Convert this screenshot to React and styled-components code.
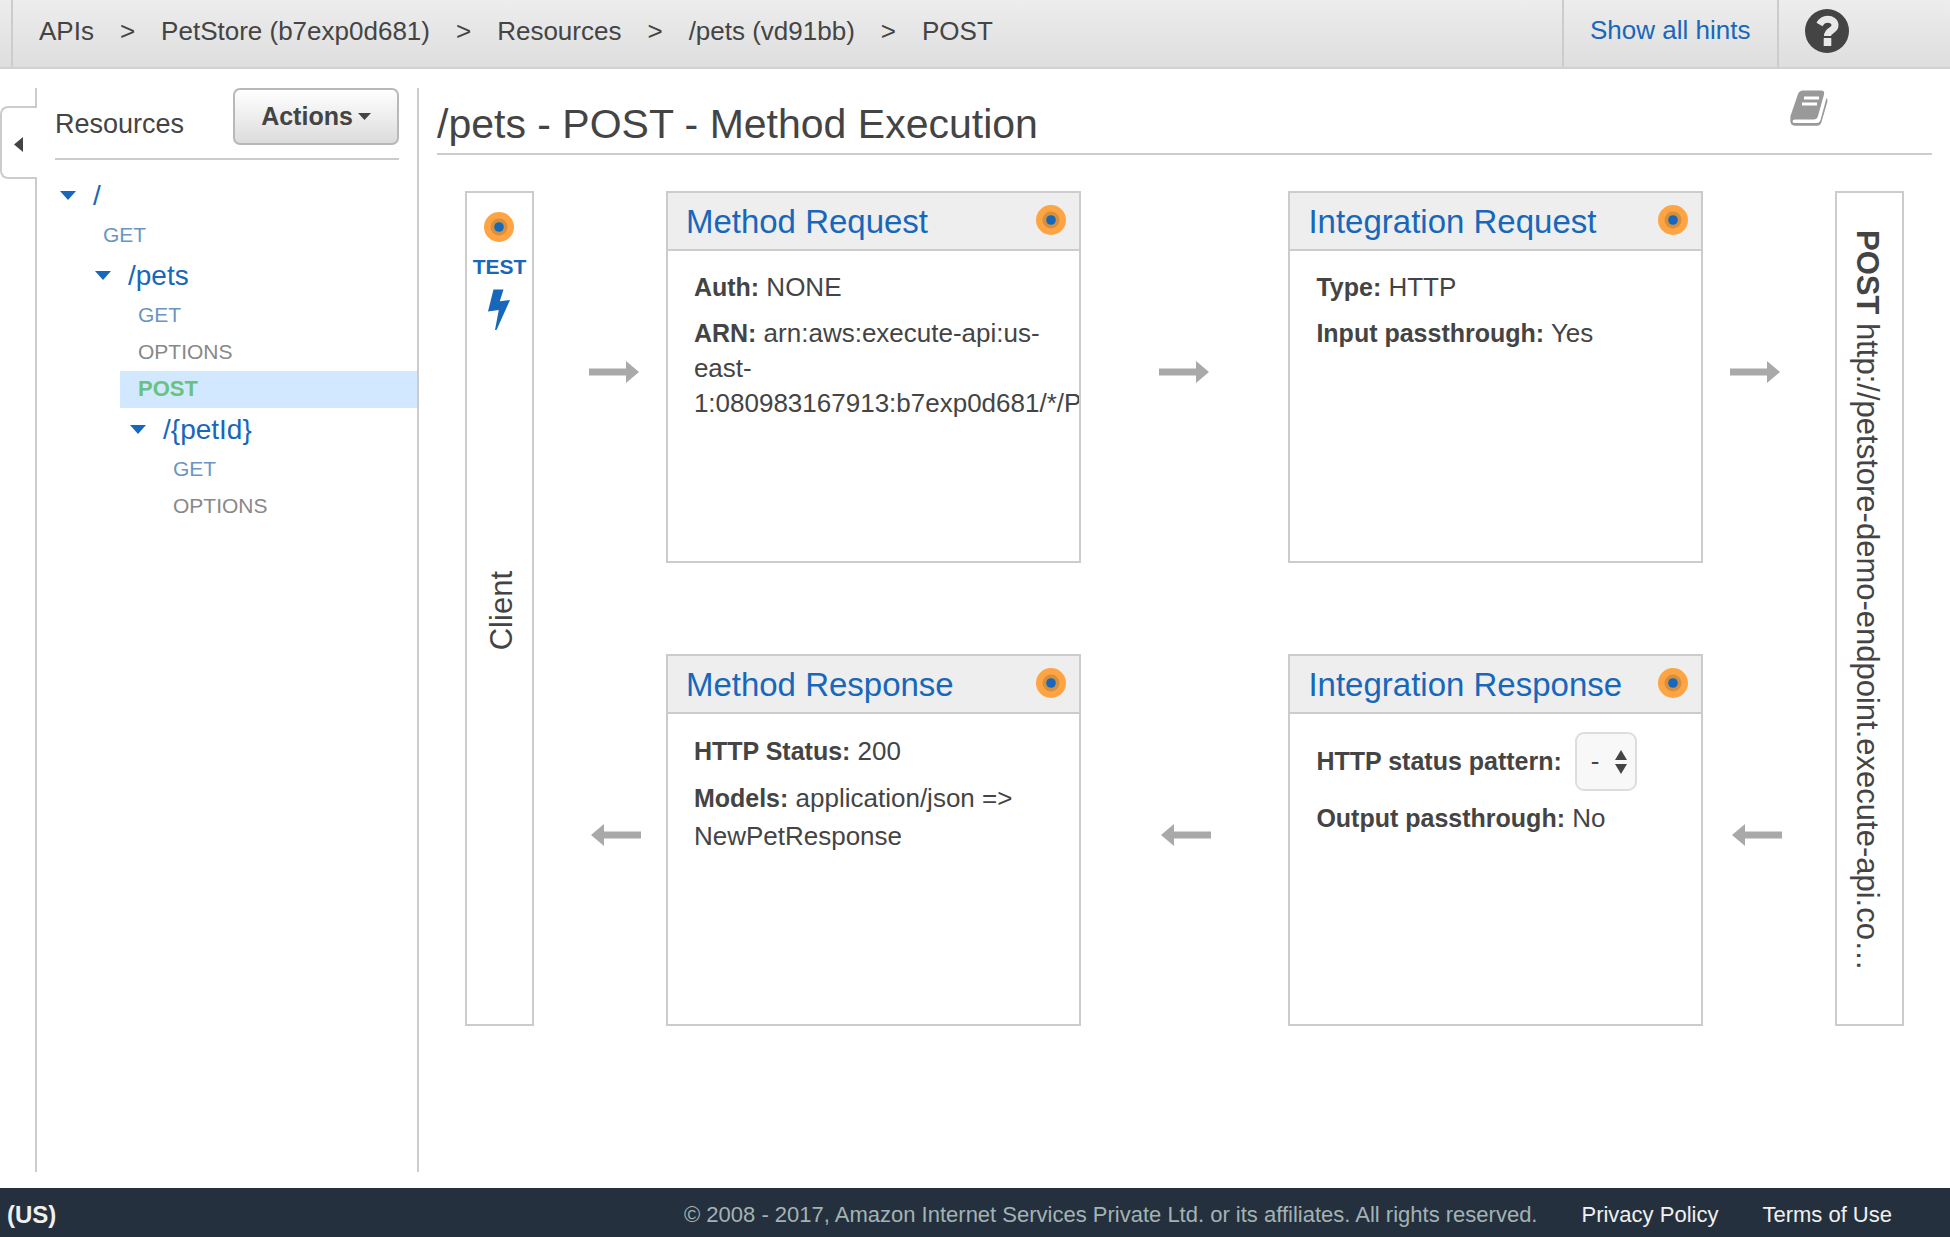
import React from "react";
import styled, { createGlobalStyle } from "styled-components";

const ink = "#444";
const blue = "#1767ba";
const line = "#ccc";

const Global = createGlobalStyle`
  * { box-sizing: border-box; }
  body { margin: 0; background: #fff; color: ${ink}; font-family: "Liberation Sans", Arial, sans-serif; font-size: 26px; }
  a { color: ${blue}; text-decoration: none; }
  button { font: inherit; color: inherit; cursor: pointer; }
  h1, h2, ul, ol, p { margin: 0; padding: 0; font-weight: normal; list-style: none; }
`;

const Page = styled.div`
  min-height: 100vh;
  display: flex;
  flex-direction: column;
`;

const TopBar = styled.header`
  display: flex;
  height: 69px;
  border-bottom: 2px solid #d2d2d2;
  background: linear-gradient(#ededed, #dedede);
  white-space: nowrap;
`;

const Crumbs = styled.ol`
  flex: 1;
  display: flex;
  align-items: center;
  gap: 26px;
  && { margin-left: 11px; padding: 0 0 6px 26px; }
  border-left: 2px solid ${line};
  line-height: 30px;
  a { color: ${ink}; }
`;

const TopCell = styled.div`
  display: flex;
  align-items: center;
  padding: 0 26px 6px;
  border-left: 2px solid ${line};
  width: ${(p) => p.$width}px;
`;

const IconButton = styled.button`
  display: flex;
  padding: 0;
  border: 0;
  background: none;
`;

const Body = styled.div`
  flex: 1;
  display: flex;
  padding: 19px 0 16px;
`;

const Strip = styled.div`
  width: 37px;
  flex: none;
  display: flex;
  flex-direction: column;
`;

const StripEdge = styled.div`
  border-right: 2px solid ${line};
  flex: ${(p) => (p.$grow ? "1" : "0 0 18px")};
`;

const CollapseTab = styled.button`
  height: 73px;
  display: flex;
  align-items: center;
  padding: 3px 0 0 12px;
  border: 2px solid ${line};
  border-right: 0;
  border-radius: 8px 0 0 8px;
  background: #fff;
`;

const Sidebar = styled.nav`
  flex: none;
  width: 382px;
  border-right: 2px solid ${line};
`;

const SideHead = styled.div`
  display: flex;
  justify-content: space-between;
  height: 72px;
  margin: 0 18px 14px;
  border-bottom: 2px solid ${line};
`;

const SideTitle = styled.h2`
  font-size: 27px;
  line-height: 32px;
  && { padding-top: 20px; }
`;

const ActionsButton = styled.button`
  display: flex;
  align-items: center;
  justify-content: center;
  gap: 5px;
  width: 166px;
  height: 57px;
  padding: 0;
  border: 2px solid #b8b8b8;
  border-radius: 7px;
  background: linear-gradient(#fff, #dcdcdc);
  font-size: 25px;
  font-weight: bold;
`;

const ResourceRow = styled.li`
  height: 43px;
  display: flex;
  align-items: center;
  gap: 17px;
  padding-left: ${(p) => 23 + p.$depth * 35}px;
  font-size: 28px;
  a { line-height: 32px; }
`;

const methodColor = { GET: "#6a95c2", OPTIONS: "#888", POST: "#69c182" };

const MethodRow = styled.li`
  height: 37px;
  display: flex;
  align-items: center;
  margin-left: ${(p) => 48 + p.$depth * 35}px;
  padding: 0 0 2px 18px;
  font-size: ${(p) => (p.$active ? 22 : 21)}px;
  font-weight: ${(p) => (p.$active ? "bold" : "normal")};
  background: ${(p) => (p.$active ? "#d1e8ff" : "none")};
  a { color: ${(p) => methodColor[p.$name]}; line-height: 24px; }
`;

const Main = styled.main`
  flex: 1;
  min-width: 0;
  padding: 0 18px;
`;

const TitleRow = styled.div`
  display: flex;
  justify-content: space-between;
  align-items: flex-start;
  height: 67px;
  padding: 2px 104px 0 0;
  border-bottom: 2px solid ${line};
`;

const Title = styled.h1`
  font-size: 41px;
  line-height: 46px;
  && { padding-top: 11px; }
`;

const Flow = styled.div`
  display: grid;
  grid-template-columns: 69px 132fr 415fr 208fr 415fr 132fr 69px;
  grid-template-rows: 372px 372px;
  row-gap: 91px;
  padding: 36px 28px 0;
`;

const EndBox = styled.section`
  grid-row: 1 / 3;
  grid-column: ${(p) => p.$column};
  display: flex;
  flex-direction: column;
  align-items: center;
  border: 2px solid ${line};
`;

const TestLink = styled.a`
  display: flex;
  flex-direction: column;
  align-items: center;
  padding-top: 19px;
  font-size: 21px;
  line-height: 24px;
  font-weight: bold;
  span { padding: 13px 0 10px; }
`;

const ClientLabel = styled.span`
  margin-top: 240px;
  padding-right: 4px;
  writing-mode: vertical-rl;
  transform: rotate(180deg);
  font-size: 31px;
  line-height: 36px;
`;

const EndpointLabel = styled.p`
  && { padding: 37px 4px 0 0; }
  writing-mode: vertical-rl;
  font-size: 31px;
  line-height: 36px;
  white-space: nowrap;
`;

const ArrowCell = styled.div`
  grid-row: ${(p) => p.$row};
  grid-column: ${(p) => p.$column};
  display: flex;
  align-items: center;
  justify-content: ${(p) => p.$align};
  padding: ${(p) => (p.$row === 2 ? "0 25px 10px 29px" : "0 27px 10px")};
`;

const CardBox = styled.section`
  grid-row: ${(p) => p.$row};
  grid-column: ${(p) => p.$column};
  min-width: 0;
  overflow: hidden;
  border: 2px solid ${line};
`;

const CardHead = styled.div`
  display: flex;
  align-items: center;
  justify-content: space-between;
  height: 58px;
  padding: 0 13px 2px 18px;
  border-bottom: 2px solid ${line};
  background: #eee;
  h2 { font-size: 33px; line-height: 38px; padding-top: 4px; }
`;

const CardBody = styled.div`
  display: flex;
  flex-direction: column;
  gap: ${(p) => p.$gap}px;
  padding: ${(p) => p.$top}px 0 0 26px;
  line-height: ${(p) => p.$line}px;
  b, label { font-size: 25px; font-weight: bold; }
`;

const ArnText = styled.p`
  width: 350px;
`;

const PatternRow = styled.div`
  display: flex;
  align-items: center;
  gap: 13px;
`;

const SelectBox = styled.div`
  display: grid;
  align-items: center;
  height: 59px;
  width: 62px;
  border: 2px solid #ddd;
  border-radius: 9px;
  background: #f8f8f8;
  > * { grid-area: 1 / 1; }
  svg { justify-self: end; margin-right: 8px; pointer-events: none; }
`;

const Select = styled.select`
  appearance: none;
  width: 100%;
  height: 100%;
  padding: 0 0 0 14px;
  border: 0;
  background: none;
  color: ${ink};
  font: inherit;
`;

const Footer = styled.footer`
  display: flex;
  align-items: center;
  height: 49px;
  padding: 4px 58px 0 7px;
  background: #25303e;
  color: #a3b3b3;
  font-size: 22px;
  white-space: nowrap;
  a { color: #f0f0f0; margin-left: 44px; }
`;

const Region = styled.button`
  margin-right: auto;
  padding: 0;
  border: 0;
  background: none;
  color: #f0f0f0;
  font-size: 24px;
  font-weight: bold;
`;

const Dot = () => (
  <svg width="30" height="30" viewBox="0 0 30 30" aria-hidden="true">
    <circle cx="15" cy="15" r="15" fill="#fea442" />
    <circle cx="15" cy="15" r="8.5" fill="#d48f40" />
    <circle cx="15" cy="15" r="4.8" fill={blue} />
  </svg>
);

const Caret = ({ w, h, color }) => (
  <svg width={w} height={h} viewBox="0 0 16 9" preserveAspectRatio="none" aria-hidden="true">
    <path d="M0 0H16L8 9Z" fill={color} />
  </svg>
);

const Arrow = ({ back }) => (
  <svg width="50" height="28" viewBox="0 0 50 28" aria-hidden="true">
    <path d={back ? "M0 14L13 3V10.5H50V17.5H13V25Z" : "M50 14L37 3V10.5H0V17.5H37V25Z"} fill="#a9a9a9" />
  </svg>
);

const Bolt = () => (
  <svg width="24" height="42" viewBox="0 0 24 42" aria-hidden="true">
    <path d="M6.500 0.500H16.500L12.800 12.300L23 11L9.500 41H8L11.800 21L1 22.500Z" fill={blue} />
  </svg>
);

const Help = () => (
  <svg width="44" height="44" viewBox="0 0 44 44" aria-hidden="true">
    <circle cx="22" cy="22" r="22" fill={ink} />
    <path d="M14.500 15.500C16.500 12 18.500 10.300 22.500 10.300C27 10.300 30 12.800 30 16.300C30 22 22.500 21 22.500 27" fill="none" stroke="#e8e8e8" strokeWidth="7" />
    <rect x="18.700" y="29" width="7.600" height="8" fill="#e8e8e8" />
  </svg>
);

const Book = () => (
  <svg width="38" height="36" viewBox="0 0 38 36" aria-hidden="true">
    <path d="M13 0.500H31Q35 0.500 34 4.500L28 26Q27 29.500 23.500 29.500H5Q2.500 29.500 2.500 31.500Q2.500 33 5 33H27Q29.500 33 30.500 30L36.500 8Q38 9 37.300 12L31.500 32Q30.500 35.700 27 35.700H5Q0 35.700 0.300 30L0.500 26L8 4Q9.500 0.500 13 0.500Z" fill="#999" />
    <path d="M14 8H29M12 14H27" stroke="#fff" strokeWidth="2.800" />
  </svg>
);

const Sorter = () => (
  <svg width="12" height="26" viewBox="0 0 12 26" aria-hidden="true">
    <path d="M6 1L12 11H0ZM6 25L0 15H12Z" fill={ink} />
  </svg>
);

const crumbs = ["APIs", "PetStore (b7exp0d681)", "Resources", "/pets (vd91bb)", "POST"];

const tree = [
  { path: "/", depth: 0 },
  { method: "GET", depth: 0 },
  { path: "/pets", depth: 1 },
  { method: "GET", depth: 1 },
  { method: "OPTIONS", depth: 1 },
  { method: "POST", depth: 1, active: true },
  { path: "/{petId}", depth: 2 },
  { method: "GET", depth: 2 },
  { method: "OPTIONS", depth: 2 },
];

const Card = ({ title, row, column, top = 19, gap = 11, lineHeight = 35, children }) => (
  <CardBox $row={row} $column={column}>
    <CardHead>
      <h2><a href="#">{title}</a></h2>
      <Dot />
    </CardHead>
    <CardBody $top={top} $gap={gap} $line={lineHeight}>{children}</CardBody>
  </CardBox>
);

export default function App() {
  return (
    <Page>
      <Global />
      <TopBar>
        <Crumbs>
          {crumbs.map((c, i) => (
            <React.Fragment key={c}>
              {i > 0 && <li aria-hidden="true">&gt;</li>}
              <li><a href="#">{c}</a></li>
            </React.Fragment>
          ))}
        </Crumbs>
        <TopCell $width={215}><a href="#">Show all hints</a></TopCell>
        <TopCell $width={173}><IconButton aria-label="Help"><Help /></IconButton></TopCell>
      </TopBar>
      <Body>
        <Strip>
          <StripEdge />
          <CollapseTab aria-label="Collapse">
            <svg width="9" height="15" viewBox="0 0 9 15"><path d="M9 0V15L0 7.500Z" fill={ink} /></svg>
          </CollapseTab>
          <StripEdge $grow />
        </Strip>
        <Sidebar>
          <SideHead>
            <SideTitle>Resources</SideTitle>
            <ActionsButton>Actions<Caret w={13} h={7} color={ink} /></ActionsButton>
          </SideHead>
          <ul>
            {tree.map((n, i) =>
              n.path ? (
                <ResourceRow key={i} $depth={n.depth}>
                  <Caret w={16} h={9} color={blue} />
                  <a href="#">{n.path}</a>
                </ResourceRow>
              ) : (
                <MethodRow key={i} $depth={n.depth} $name={n.method} $active={n.active}>
                  <a href="#">{n.method}</a>
                </MethodRow>
              )
            )}
          </ul>
        </Sidebar>
        <Main>
          <TitleRow>
            <Title>/pets - POST - Method Execution</Title>
            <IconButton aria-label="Documentation"><Book /></IconButton>
          </TitleRow>
          <Flow>
            <EndBox $column={1}>
              <TestLink href="#"><Dot /><span>TEST</span><Bolt /></TestLink>
              <ClientLabel>Client</ClientLabel>
            </EndBox>
            <ArrowCell $row={1} $column={2} $align="flex-end"><Arrow /></ArrowCell>
            <Card title="Method Request" row={1} column={3}>
              <p><b>Auth:</b> NONE</p>
              <ArnText><b>ARN:</b> arn:aws:execute-api:us-east-1:080983167913:b7exp0d681/*/POST/pets</ArnText>
            </Card>
            <ArrowCell $row={1} $column={4} $align="center"><Arrow /></ArrowCell>
            <Card title="Integration Request" row={1} column={5}>
              <p><b>Type:</b> HTTP</p>
              <p><b>Input passthrough:</b> Yes</p>
            </Card>
            <ArrowCell $row={1} $column={6} $align="flex-start"><Arrow /></ArrowCell>
            <ArrowCell $row={2} $column={2} $align="flex-end"><Arrow back /></ArrowCell>
            <Card title="Method Response" row={2} column={3} lineHeight={38} top={18} gap={9}>
              <p><b>HTTP Status:</b> 200</p>
              <p><b>Models:</b> application/json =&gt; NewPetResponse</p>
            </Card>
            <ArrowCell $row={2} $column={4} $align="center"><Arrow back /></ArrowCell>
            <Card title="Integration Response" row={2} column={5} top={18} gap={10}>
              <PatternRow>
                <label htmlFor="pattern">HTTP status pattern:</label>
                <SelectBox>
                  <Select id="pattern"><option>-</option></Select>
                  <Sorter />
                </SelectBox>
              </PatternRow>
              <p><b>Output passthrough:</b> No</p>
            </Card>
            <ArrowCell $row={2} $column={6} $align="flex-start"><Arrow back /></ArrowCell>
            <EndBox $column={7}>
              <EndpointLabel><b>POST</b> http://petstore-demo-endpoint.execute-api.co…</EndpointLabel>
            </EndBox>
          </Flow>
        </Main>
      </Body>
      <Footer>
        <Region>(US)</Region>
        <span>© 2008 - 2017, Amazon Internet Services Private Ltd. or its affiliates. All rights reserved.</span>
        <a href="#">Privacy Policy</a>
        <a href="#">Terms of Use</a>
      </Footer>
    </Page>
  );
}
